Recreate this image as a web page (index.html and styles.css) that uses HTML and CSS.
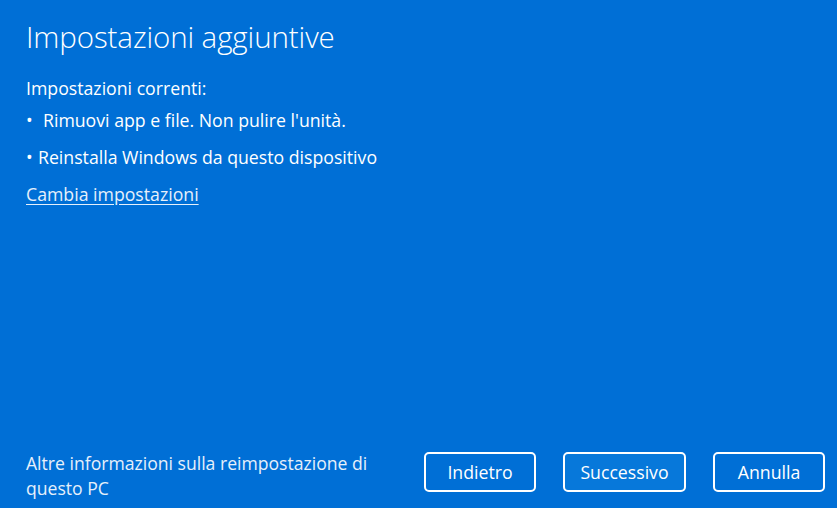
FILE: index.html
```html
<!DOCTYPE html>
<html lang="it">
<head>
<meta charset="utf-8">
<link rel="stylesheet" href="styles.css">
</head>
<body>
<div class="page">
  <main class="content">
    <h1 class="title">Impostazioni aggiuntive</h1>
    <p class="label">Impostazioni correnti:</p>
    <p class="item"><span class="bullet wide">•</span>Rimuovi app e file. Non pulire l'unità.</p>
    <p class="item"><span class="bullet">•</span>Reinstalla Windows da questo dispositivo</p>
    <a class="link" href="#">Cambia impostazioni</a>
  </main>
  <footer class="footer">
    <a class="info" href="#">Altre informazioni sulla reimpostazione di questo PC</a>
    <div class="buttons">
      <button class="btn">Indietro</button>
      <button class="btn primary">Successivo</button>
      <button class="btn">Annulla</button>
    </div>
  </footer>
</div>
</body>
</html>
```
FILE: styles.css
```css
html, body {
  margin: 0;
  padding: 0;
  height: 100%;
}
body {
  background: #006fd6;
  color: #ffffff;
  font-family: "Open Sans", "Noto Sans", "Liberation Sans", sans-serif;
  overflow: hidden;
}
.page {
  height: 508px;
  display: flex;
  flex-direction: column;
  justify-content: space-between;
  box-sizing: border-box;
  padding: 0 12px 0 26px;
}
.content {
  display: flex;
  flex-direction: column;
  align-items: flex-start;
}
.title {
  font-weight: 300;
  font-size: 29.5px;
  margin: 18px 0 0 0;
  line-height: 38px;
  letter-spacing: -0.1px;
}
.label {
  margin: 21px 0 0 0;
  font-size: 17.7px;
  line-height: 22px;
}
.item {
  margin: 10px 0 0 0;
  font-size: 17.7px;
  line-height: 22px;
}
.item + .item {
  margin-top: 15px;
}
.bullet {
  display: inline-block;
  width: 12px;
}
.bullet.wide {
  width: 17px;
}
.link {
  margin-top: 15px;
  font-size: 17.7px;
  line-height: 22px;
  color: #e6f0fb;
  text-decoration: underline;
  text-underline-offset: 3px;
}
.footer {
  display: flex;
  align-items: flex-end;
  justify-content: space-between;
  padding-bottom: 7px;
}
.info {
  width: 355px;
  font-size: 17.6px;
  line-height: 25px;
  color: #e6f0fb;
  text-decoration: none;
}
.buttons {
  display: flex;
  gap: 27px;
  margin-bottom: 9px;
}
.btn {
  font-family: inherit;
  font-size: 17.7px;
  color: #ffffff;
  background: transparent;
  border: 2px solid #ffffff;
  border-radius: 5px;
  height: 40px;
  width: 112px;
  padding: 0;
}
.btn.primary {
  width: 123px;
  background: #0778da;
}
```
